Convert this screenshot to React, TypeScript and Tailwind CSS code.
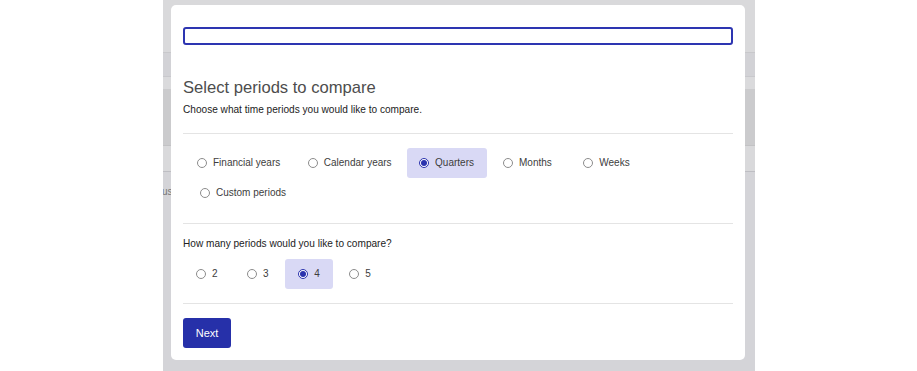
import { useState } from "react";

const periodRowOne = [
  { label: "Financial years", extra: "" },
  { label: "Calendar years", extra: "" },
  { label: "Quarters", extra: "" },
  { label: "Months", extra: "ml-[1.5px]" },
  { label: "Weeks", extra: "ml-[4px]" },
];
const periodCounts = ["2", "3", "4", "5"];

function Radio({ checked }: { checked: boolean }) {
  return (
    <span
      className={
        checked
          ? "flex h-[10px] w-[10px] shrink-0 items-center justify-center rounded-full border border-[#2b33ad] bg-white"
          : "flex h-[10px] w-[10px] shrink-0 items-center justify-center rounded-full border border-[#8c8c8c] bg-white"
      }
    >
      {checked && <span className="h-[6px] w-[6px] rounded-full bg-[#2b33ad]" />}
    </span>
  );
}

function Option({
  label,
  checked,
  onSelect,
  wide,
  extra = "",
}: {
  label: string;
  checked: boolean;
  onSelect: () => void;
  wide?: boolean;
  extra?: string;
}) {
  return (
    <button
      onClick={onSelect}
      className={
        (wide ? "px-[13px] " : "pl-[12px] pr-[13px] ") +
        (checked ? "bg-[#d9d9f5] " : "bg-transparent ") +
        extra +
        " flex h-[30px] items-center gap-[6px] rounded-[3px] text-[10px] leading-[14px] text-[#3d3d3d]"
      }
    >
      <Radio checked={checked} />
      <span>{label}</span>
    </button>
  );
}

export default function App() {
  const [period, setPeriod] = useState("Quarters");
  const [count, setCount] = useState("4");

  return (
    <div className="flex h-[371px] w-full bg-white font-['Liberation_Sans',Arial,sans-serif]">
      {/* backdrop with the page behind it */}
      <div className="relative ml-[163px] h-full w-[592px] overflow-hidden">
        <div className="h-[52px] bg-[#d9d9db]" />
        <div className="h-px bg-[#c8c8cb]" />
        <div className="h-[23px] bg-[#d2d2d6]" />
        <div className="h-px bg-[#c8c8cc]" />
        <div className="h-[12px] bg-[#dadadc]" />
        <div className="h-[56px] bg-[#cbcbcd]" />
        <div className="h-px bg-[#c2c2c4]" />
        <div className="h-[25px] bg-[#d9d9db]" />
        <div className="h-px bg-[#bebec3]" />
        <div className="h-[199px] bg-[#d4d4d8] pt-[13px] text-[10px] leading-[14px] text-[#777]">
          <span className="-ml-px">us</span>
        </div>

        {/* modal */}
        <div className="absolute left-[8px] top-[5px] flex h-[355px] w-[574px] flex-col rounded-[5px] bg-white px-[12px]">
          <div className="mt-[22px] h-[18px] rounded-[3px] border-2 border-[#2d35b1]" />

          <h2 className="mt-[33px] text-[16.6px] font-light leading-[20px] text-[#4d4d4d]">Select periods to compare</h2>
          <p className="mt-[5px] text-[10.1px] leading-[14px] text-[#222]">
            Choose what time periods you would like to compare.
          </p>

          <div className="mt-[16px] border-t border-[#e4e4e4]" />

          <div className="mt-[14px] flex gap-x-[2.5px] pl-[2px]">
            {periodRowOne.map((p) => (
              <Option
                key={p.label}
                label={p.label}
                extra={p.extra}
                checked={period === p.label}
                onSelect={() => setPeriod(p.label)}
              />
            ))}
          </div>
          <div className="flex pl-[5px]">
            <Option
              label="Custom periods"
              checked={period === "Custom periods"}
              onSelect={() => setPeriod("Custom periods")}
            />
          </div>

          <div className="mt-[15px] border-t border-[#e4e4e4]" />

          <p className="mt-[13px] text-[10.1px] leading-[14px] text-[#222]">How many periods would you like to compare?</p>
          <div className="mt-[8px] flex gap-x-[3.5px]">
            {periodCounts.map((c) => (
              <Option key={c} label={c} checked={count === c} onSelect={() => setCount(c)} wide />
            ))}
          </div>

          <div className="mt-[14px] border-t border-[#e4e4e4]" />

          <div className="mt-[14px]">
            <button className="h-[30px] w-[48px] rounded-[3px] bg-[#2630a9] text-[11px] font-medium text-white">
              Next
            </button>
          </div>
        </div>
      </div>
    </div>
  );
}
